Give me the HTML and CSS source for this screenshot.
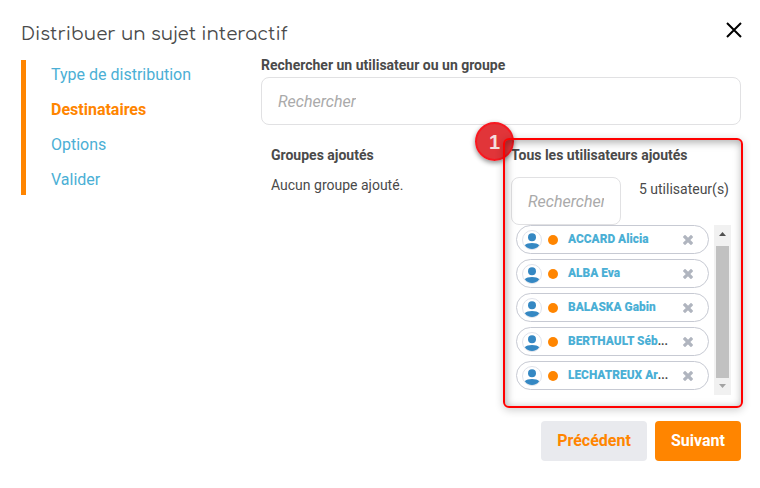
FILE: index.html
```html
<!DOCTYPE html>
<html lang="fr">
<head>
<meta charset="utf-8">
<title>Distribuer un sujet interactif</title>
<link rel="stylesheet" href="styles.css">
</head>
<body>
<svg class="defs" aria-hidden="true">
  <symbol id="avatar" viewBox="0 0 20 20">
    <circle cx="10" cy="10" r="9.5" fill="#fff" stroke="#dfe2ea"/>
    <circle cx="10" cy="7.3" r="4" fill="#3588c3"/>
    <path d="M2.8 15.3C5 12.2 15 12.2 17.2 15.3C15.5 18 13 19 10 19S4.500 18 2.800 15.300Z" fill="#3588c3"/>
  </symbol>
  <symbol id="cross" viewBox="0 0 10 10">
    <path d="M2 2L8 8M8 2L2 8" stroke="#b0b5bf" stroke-width="3.2" stroke-linecap="square"/>
  </symbol>
</svg>
<div class="dialog">
  <header class="header">
    <h1 class="title">Distribuer un sujet interactif</h1>
    <svg class="close" viewBox="0 0 16 16"><path d="M1 1L15 15M15 1L1 15" stroke="#000" stroke-width="2"/></svg>
  </header>
  <div class="body">
    <nav class="steps">
      <a class="step">Type de distribution</a>
      <a class="step active">Destinataires</a>
      <a class="step">Options</a>
      <a class="step">Valider</a>
    </nav>
    <main class="main">
      <label class="label">Rechercher un utilisateur ou un groupe</label>
      <div class="field"><span>Rechercher</span></div>
      <div class="columns">
        <section class="column">
          <h2 class="label">Groupes ajoutés</h2>
          <p class="text">Aucun groupe ajouté.</p>
        </section>
        <section class="column">
          <h2 class="label">Tous les utilisateurs ajoutés</h2>
          <div class="filter">
            <div class="field small"><span>Rechercher</span></div>
            <p class="text">5 utilisateur(s)</p>
          </div>
          <div class="list">
            <div class="users">
              <div class="user"><svg class="avatar"><use href="#avatar"/></svg><i class="dot"></i><span class="name"><b>ACCARD Alicia</b></span><svg class="cross"><use href="#cross"/></svg></div>
              <div class="user"><svg class="avatar"><use href="#avatar"/></svg><i class="dot"></i><span class="name"><b>ALBA Eva</b></span><svg class="cross"><use href="#cross"/></svg></div>
              <div class="user"><svg class="avatar"><use href="#avatar"/></svg><i class="dot"></i><span class="name"><b>BALASKA Gabin</b></span><svg class="cross"><use href="#cross"/></svg></div>
              <div class="user"><svg class="avatar"><use href="#avatar"/></svg><i class="dot"></i><span class="name"><b>BERTHAULT Séb</b>...</span><svg class="cross"><use href="#cross"/></svg></div>
              <div class="user"><svg class="avatar"><use href="#avatar"/></svg><i class="dot"></i><span class="name"><b>LECHATREUX Ar</b>...</span><svg class="cross"><use href="#cross"/></svg></div>
            </div>
            <div class="scrollbar">
              <svg viewBox="0 0 17 17"><path d="M5 11L8.500 7L12 11Z" fill="#505050"/></svg>
              <div class="thumb"></div>
              <svg viewBox="0 0 17 17"><path d="M5 6L8.500 10L12 6Z" fill="#a3a3a3"/></svg>
            </div>
          </div>
          <div class="badge">1</div>
          <div class="highlight"></div>
        </section>
      </div>
      <footer class="actions">
        <button class="button">Précédent</button>
        <button class="button primary">Suivant</button>
      </footer>
    </main>
  </div>
</div>
</body>
</html>
```
FILE: styles.css
```css
* { box-sizing: border-box; }
body { margin: 0; background: #fff; color: #4a4a4a; font: 14px/20px Roboto, sans-serif; }
h1, h2, p { margin: 0; }
.defs { position: absolute; width: 0; height: 0; }
.dialog { width: 760px; height: 488px; padding: 0 19px 0 21px; overflow: hidden; }
.header { display: flex; justify-content: space-between; height: 60px; }
.title { padding-top: 22px; font: 400 18.2px/24px Comfortaa, Lato, sans-serif; }
.close { width: 16px; height: 16px; margin-top: 22px; margin-right: -1px; }
.body { display: flex; align-items: flex-start; }
.steps { display: flex; flex-direction: column; width: 240px; height: 135px; padding-left: 25px; border-left: 5px solid #ff8500; }
.step { flex: none; height: 35px; padding-top: 5px; color: #4bafd5; font-size: 16px; line-height: 20px; }
.step:last-child { height: 30px; }
.active { color: #ff8500; font-weight: 700; }
.main { width: 480px; margin-top: -5px; }
.label { display: block; font-size: 14px; line-height: 20px; font-weight: 700; }
.field { display: flex; align-items: center; height: 48px; margin-top: 2px; padding: 2px 16px 0; border: 1px solid #e1e1e3; border-radius: 8px; color: #aaa; font-size: 16px; font-style: italic; }
.field span { overflow: hidden; white-space: nowrap; padding: 2px 0; }
.small { width: 110px; margin: 0; }
.columns { display: flex; height: 276px; margin-top: 20px; }
.column { position: relative; width: 240px; padding: 0 10px; }
.text { margin-top: 10px; }
.filter { display: flex; justify-content: space-between; margin-top: 12px; padding-right: 2px; }
.filter .text { margin-top: 2px; }
.list { display: flex; height: 170px; padding-left: 5px; }
.users { display: flex; flex-direction: column; gap: 5px; width: 193px; }
.user { display: flex; align-items: center; height: 29px; padding-left: 5px; border: 1px solid #c7cad3; border-radius: 15px; }
.avatar { width: 20px; height: 20px; margin-top: 1px; }
.dot { width: 10px; height: 10px; margin: 1px 10px 0 6px; border-radius: 50%; background: #ff8500; }
.name { width: 115px; margin-top: -1px; font-size: 11.9px; line-height: 18px; white-space: nowrap; font-weight: 700; color: #4a4a4a; }
.name b { color: #4bafd5; }
.cross { width: 10px; height: 10px; margin-top: 1px; }
.scrollbar { width: 17px; margin-left: 5px; background: #f1f1f1; }
.scrollbar svg { display: block; width: 17px; height: 17px; }
.thumb { height: 132px; margin: 4px 2px 0; background: #c1c1c1; }
.highlight { position: absolute; left: 2px; top: -7px; width: 240px; height: 270px; border: 2px solid #f00; border-radius: 6px; box-shadow: 0 2px 8px rgba(0,0,0,.2), inset 1px 2px 8px rgba(0,0,0,.35); }
.badge { position: absolute; left: -26px; top: -23px; width: 39px; height: 39px; border: 2px solid #f71820; border-radius: 50%; background: rgba(222,36,40,.92); box-shadow: 0 2px 5px rgba(0,0,0,.45); color: #f5dede; font: 700 20px/36px "Liberation Sans", sans-serif; text-align: center; }
.actions { display: flex; justify-content: flex-end; gap: 8px; }
.button { width: 106px; height: 40px; padding: 0; border: 0; border-radius: 4px; background: #e9eaee; color: #ff8500; font: 700 16px/20px Roboto, sans-serif; }
.primary { width: 86px; background: #ff8500; color: #fff; }
```
